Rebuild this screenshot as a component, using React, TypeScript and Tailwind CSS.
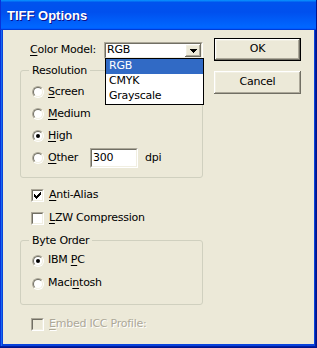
import type { ReactNode } from 'react'

/**
 * "TIFF Options" export dialog, XP Luna frame around a classic-looking
 * client area. Colour Model combo is shown with its list dropped open.
 */

function Radio({ checked }: { checked?: boolean }) {
  return (
    <span className="flex size-[12px] shrink-0 items-center justify-center rounded-full border border-t-[#aca899] border-l-[#aca899] border-r-white border-b-white">
      <span className="flex size-[10px] items-center justify-center rounded-full border border-t-[#716f64] border-l-[#716f64] border-r-[#f1efe2] border-b-[#f1efe2] bg-white">
        {checked && <span className="size-[4px] rounded-full bg-black" />}
      </span>
    </span>
  )
}

function Check({ checked, disabled }: { checked?: boolean; disabled?: boolean }) {
  return (
    <span className="flex size-[13px] shrink-0 border border-t-[#aca899] border-l-[#aca899] border-r-white border-b-white">
      <span
        className={
          'flex flex-1 items-center justify-center border border-t-[#716f64] border-l-[#716f64] border-r-[#f1efe2] border-b-[#f1efe2] ' +
          (disabled ? 'bg-[#ece9d8]' : 'bg-white')
        }
      >
        {checked && (
          <svg width="7" height="7" viewBox="0 0 7 7" shapeRendering="crispEdges">
            <rect x="0" y="2" width="1" height="3" />
            <rect x="1" y="3" width="1" height="3" />
            <rect x="2" y="4" width="1" height="3" />
            <rect x="3" y="3" width="1" height="3" />
            <rect x="4" y="2" width="1" height="3" />
            <rect x="5" y="1" width="1" height="3" />
            <rect x="6" y="0" width="1" height="3" />
          </svg>
        )}
      </span>
    </span>
  )
}

// accelerator letter
function K({ children }: { children: ReactNode }) {
  return <span className="underline underline-offset-[2px]">{children}</span>
}

function RadioRow({ checked, h = 'h-[22px]', children }: { checked?: boolean; h?: string; children: ReactNode }) {
  return (
    <div className={`flex items-center gap-[4px] ${h}`}>
      <Radio checked={checked} />
      {children}
    </div>
  )
}

function Group({ title, className, children }: { title: string; className?: string; children: ReactNode }) {
  return (
    <fieldset className={`rounded-[3px] border border-[#d0d0bf] px-[11px] ${className ?? ''}`}>
      <legend className="ml-[-3px] px-[3px] leading-[13px]">{title}</legend>
      {children}
    </fieldset>
  )
}

const raised =
  'shadow-[inset_-1px_-1px_#716f64,inset_1px_1px_#ffffff,inset_-2px_-2px_#aca899,inset_2px_2px_#f1efe2]'

export default function App() {
  return (
    <div className="flex h-[348px] w-[317px] flex-col font-['DejaVu_Sans',sans-serif] text-[11px] tracking-[-0.25px] text-black">
      {/* title bar */}
      <div className="flex h-[30px] shrink-0 items-center bg-[linear-gradient(180deg,#0997ff,#0053ee_8%,#0050ee_40%,#0066ff_88%,#0066ff_93%,#005bff_95%,#003dd7_96%,#003dd7)] pl-[7px] pt-[1px] shadow-[inset_1px_0_#0831d9,inset_-1px_0_#00138c]">
        <span className="font-['Liberation_Sans',sans-serif] text-[13px] font-bold tracking-normal text-white [text-shadow:1px_1px_#0f1089]">
          TIFF Options
        </span>
      </div>

      {/* frame + client */}
      <div className="flex flex-1 bg-[#0842dc] px-[3px] pb-[4px] shadow-[inset_-1px_-1px_#00138c,inset_-2px_-2px_#001ea0,inset_1px_0_#0831d9,inset_2px_0_#166aee]">
        <div className="flex flex-1 bg-[#ece9d8]">
          <div className="ml-[17px] flex w-[183px] flex-col">
            <div className="mt-[12px] flex h-[17px] items-center pl-[10px]">
              <span>
                <K>C</K>olor Model:
              </span>
              <div className="relative ml-auto flex h-[17px] w-[99px] border border-t-[#aca899] border-l-[#aca899] border-r-white border-b-white">
                <div className="flex flex-1 border border-t-[#716f64] border-l-[#716f64] border-r-[#f1efe2] border-b-[#f1efe2] bg-white">
                  <span className="flex flex-1 items-center pl-[1px]">RGB</span>
                  <span className={`flex w-[16px] items-center justify-center bg-[#ece9d8] ${raised}`}>
                    <svg width="7" height="4" viewBox="0 0 7 4" shapeRendering="crispEdges">
                      <path d="M0 0h7v1H0zM1 1h5v1H1zM2 2h3v1H2zM3 3h1v1H3z" />
                    </svg>
                  </span>
                </div>
                {/* dropped list */}
                <div className="absolute left-0 top-full z-10 flex w-[99px] flex-col border border-black bg-white">
                  <div className="flex h-[15px] items-center bg-[#316ac5] pl-[3px] text-white">RGB</div>
                  <div className="flex h-[15px] items-center pl-[3px]">CMYK</div>
                  <div className="flex h-[15px] items-center pl-[3px]">Grayscale</div>
                </div>
              </div>
            </div>

            <Group title="Resolution" className="mt-[5px] pb-[8px] pt-[4px]">
              <RadioRow>
                <span>
                  <K>S</K>creen
                </span>
              </RadioRow>
              <RadioRow>
                <span>
                  <K>M</K>edium
                </span>
              </RadioRow>
              <RadioRow checked>
                <span>
                  <K>H</K>igh
                </span>
              </RadioRow>
              <RadioRow>
                <span className="w-[38px]">
                  <K>O</K>ther
                </span>
                <span className="flex h-[20px] w-[48px] border border-t-[#aca899] border-l-[#aca899] border-r-white border-b-white">
                  <span className="flex flex-1 items-center border border-t-[#716f64] border-l-[#716f64] border-r-[#f1efe2] border-b-[#f1efe2] bg-white pl-[1px]">
                    300
                  </span>
                </span>
                <span className="ml-[3px]">dpi</span>
              </RadioRow>
            </Group>

            <div className="ml-[11px] mt-[6px] flex h-[23px] items-center gap-[5px]">
              <Check checked />
              <span>
                <K>A</K>nti-Alias
              </span>
            </div>
            <div className="ml-[11px] flex h-[23px] items-center gap-[5px]">
              <Check />
              <span>
                <K>L</K>ZW Compression
              </span>
            </div>

            <Group title="Byte Order" className="mt-[4px] pb-[9px] pt-[2px]">
              <RadioRow checked h="h-[23px]">
                <span>
                  IBM <K>P</K>C
                </span>
              </RadioRow>
              <RadioRow h="h-[23px]">
                <span>
                  Maci<K>n</K>tosh
                </span>
              </RadioRow>
            </Group>

            <div className="ml-[11px] mt-[8px] flex h-[23px] items-center gap-[5px]">
              <Check disabled />
              <span className="text-[#aca899] [text-shadow:1px_1px_#ffffff]">
                <K>E</K>mbed ICC Profile:
              </span>
            </div>
          </div>

          <div className="ml-[11px] flex flex-col gap-[10px] pt-[8px]">
            <button className="h-[23px] w-[87px] border border-black bg-[#ece9d8] p-0">
              <span className={`flex h-full w-full items-center justify-center ${raised}`}>OK</span>
            </button>
            <button className={`flex h-[23px] w-[87px] items-center justify-center bg-[#ece9d8] ${raised}`}>
              Cancel
            </button>
          </div>
        </div>
      </div>
    </div>
  )
}
